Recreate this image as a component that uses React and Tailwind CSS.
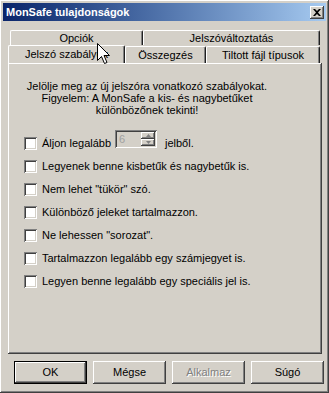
const raised =
  "shadow-[inset_-1px_-1px_#404040,inset_1px_1px_#ffffff,inset_-2px_-2px_#808080,inset_2px_2px_#d4d0c8]";
const sunken =
  "shadow-[inset_1px_1px_#808080,inset_-1px_-1px_#ffffff,inset_2px_2px_#404040,inset_-2px_-2px_#d4d0c8]";

const rules = [
  "Legyenek benne kisbetűk és nagybetűk is.",
  'Nem lehet "tükör" szó.',
  "Különböző jeleket tartalmazzon.",
  'Ne lehessen "sorozat".',
  "Tartalmazzon legalább egy számjegyet is.",
  "Legyen benne legalább egy speciális jel is.",
];

const Checkbox = () => <span className={`w-[13px] h-[13px] bg-white shrink-0 ${sunken}`} />;

const Tab = ({ label, width, selected }) => (
  <div
    className={`flex items-center justify-center border-t border-l border-white rounded-t-[2px] shadow-[inset_-1px_0_#808080] border-r border-r-[#202020] ${width} ${
      selected ? "h-[18px] relative z-10 bg-[#d4d0c8]" : "h-full"
    }`}
  >
    {label}
  </div>
);

const Button = ({ label, def, disabled }) => (
  <div
    className={`w-[73px] h-[23px] flex items-center justify-center ${
      def ? "border border-black" : ""
    }`}
  >
    <div
      className={`w-full h-full flex items-center justify-center ${raised} ${
        disabled ? "text-[#808080] [text-shadow:1px_1px_#ffffff]" : "text-black"
      }`}
    >
      {label}
    </div>
  </div>
);

const App = () => {
  return (
    <div
      className={`w-[329px] h-[393px] bg-[#d4d0c8] relative overflow-hidden text-[11px] text-black ${raised}`}
      style={{ fontFamily: '"Liberation Sans", Arial, sans-serif' }}
    >
      <div className="mx-[3px] pt-[3px]">
        <div className="h-[18px] flex items-center justify-between bg-linear-to-r from-[#0a246a] to-[#a6caf0] pl-[3px] pr-[2px]">
          <span className="text-white font-bold text-[11px]">MonSafe tulajdonságok</span>
          <div className={`w-[14px] h-[13px] bg-[#d4d0c8] flex items-center justify-center ${raised}`}>
            <svg width="8" height="7" viewBox="0 0 8 7">
              <path d="M0 0h2l2 2 2-2h2L5 3.5 8 7H6L4 5 2 7H0l3-3.5z" fill="#000" />
            </svg>
          </div>
        </div>
      </div>

      <div className="mt-[9px] ml-[10px] w-[310px] h-[15px] flex">
        <Tab label="Opciók" width="w-[133px]" />
        <Tab label="Jelszóváltoztatás" width="flex-1" />
      </div>
      <div className="ml-[8px] w-[312px] h-[18px] flex items-end">
        <Tab label="Jelszó szabályok" width="w-[117px]" selected />
        <div className="flex h-[17px] flex-1">
          <Tab label="Összegzés" width="w-[81px]" />
          <Tab label="Tiltott fájl típusok" width="flex-1" />
        </div>
      </div>

      <div className={`ml-[8px] w-[314px] h-[291px] ${raised} pt-[17px]`}>
        <div className="ml-[10px] w-[258px] text-center leading-[12px]">
          <div>Jelölje meg az új jelszóra vonatkozó szabályokat.</div>
          <div>Figyelem: A MonSafe a kis- és nagybetűket</div>
          <div>különbözőnek tekinti!</div>
        </div>
        <div className="mt-[16px] pl-[16px] flex flex-col">
          <div className="h-[23px] flex items-center">
            <Checkbox />
            <span className="ml-[5px] w-[73px]">Áljon legalább</span>
            <div className={`-mt-[10px] w-[42px] h-[18px] bg-[#d4d0c8] flex ${sunken} p-[2px]`}>
              <span className="flex-1 pl-[2px] text-[#a0a0a0] leading-[14px]">6</span>
              <div className="w-[14px] flex flex-col">
                <div className={`flex-1 flex items-center justify-center ${raised}`}>
                  <svg width="5" height="3" viewBox="0 0 5 3">
                    <path d="M2.5 0L5 3H0z" fill="#808080" />
                  </svg>
                </div>
                <div className={`flex-1 flex items-center justify-center ${raised}`}>
                  <svg width="5" height="3" viewBox="0 0 5 3">
                    <path d="M0 0h5L2.5 3z" fill="#808080" />
                  </svg>
                </div>
              </div>
            </div>
            <span className="ml-[8px]">jelből.</span>
          </div>
          {rules.map((r) => (
            <div key={r} className="h-[23px] flex items-center">
              <Checkbox />
              <span className="ml-[5px]">{r}</span>
            </div>
          ))}
        </div>
      </div>

      <div className="mt-[7px] ml-[14px] flex gap-[6px]">
        <Button label="OK" def />
        <Button label="Mégse" />
        <Button label="Alkalmaz" disabled />
        <Button label="Súgó" />
      </div>

      <svg
        className="absolute left-[97px] top-[43px] z-20"
        width="13"
        height="21"
        viewBox="0 0 13 21"
      >
        <path
          d="M0.5 0.5V17.5L4.5 13.5L7.5 20.5L10 19.5L7 12.5H12.5Z"
          fill="#ffffff"
          stroke="#000000"
          strokeWidth="1"
          strokeLinejoin="miter"
        />
      </svg>
    </div>
  );
};

export default App;
